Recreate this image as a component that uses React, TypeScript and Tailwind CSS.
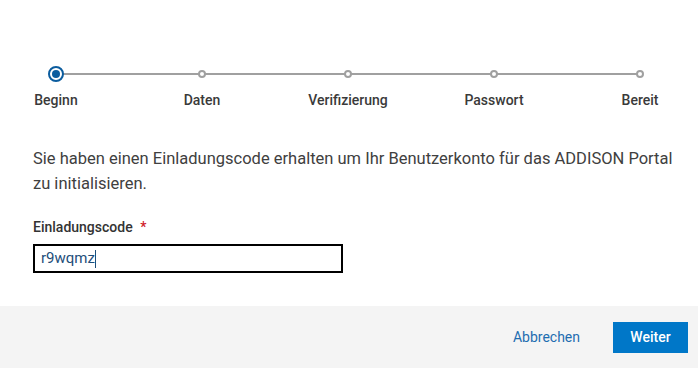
import React from "react";

const steps = ["Beginn", "Daten", "Verifizierung", "Passwort", "Bereit"];

export default function App() {
  return (
    <div className="w-[698px] h-[368px] bg-white flex flex-col" style={{ fontFamily: 'Roboto, sans-serif' }}>
      <div className="flex-1 px-[33px] pt-[66px]">
        <div className="relative w-[630px] h-[50px]">
          <div className="absolute left-[23px] right-[23px] top-[7px] h-[2px] bg-[#a0a0a0]" />
          <div className="relative flex justify-between">
            {steps.map((s, i) => (
              <div key={s} className="flex flex-col items-center w-[46px]">
                <div className="h-[16px] flex items-center justify-center">
                  {i === 0 ? (
                    <div className="w-[16px] h-[16px] rounded-full border-[2px] border-[#0b5c9e] bg-white flex items-center justify-center">
                      <div className="w-[8px] h-[8px] rounded-full bg-[#0b5c9e]" />
                    </div>
                  ) : (
                    <div className="w-[8px] h-[8px] rounded-full border-[2px] border-[#a0a0a0] bg-white" />
                  )}
                </div>
                <div className="mt-[9px] text-[14px] font-medium text-[#3a3a3a] whitespace-nowrap leading-[18px]">{s}</div>
              </div>
            ))}
          </div>
        </div>
        <p className="mt-[30px] text-[16.5px] leading-[25px] text-[#404040] w-[645px]">
          Sie haben einen Einladungscode erhalten um Ihr Benutzerkonto für das ADDISON Portal zu initialisieren.
        </p>
        <div className="mt-[22px] text-[14px] font-medium text-[#333] leading-[18px]">
          Einladungscode <span className="text-[#d0202a] ml-[4px]">*</span>
        </div>
        <div className="mt-[8px] w-[310px] h-[29px] border-[2px] border-black flex items-center px-[6px] text-[15px] text-[#1d4e7a]">
          r9wqmz<span className="w-[1px] h-[18px] bg-[#1d4e7a]" />
        </div>
      </div>
      <div className="h-[62px] bg-[#f4f4f4] flex items-center justify-end pr-[10px] gap-[33px]">
        <button className="text-[14px] text-[#1e6db0]">Abbrechen</button>
        <button className="w-[75px] h-[31px] bg-[#0077c8] text-white text-[14px] font-medium">Weiter</button>
      </div>
    </div>
  );
}
